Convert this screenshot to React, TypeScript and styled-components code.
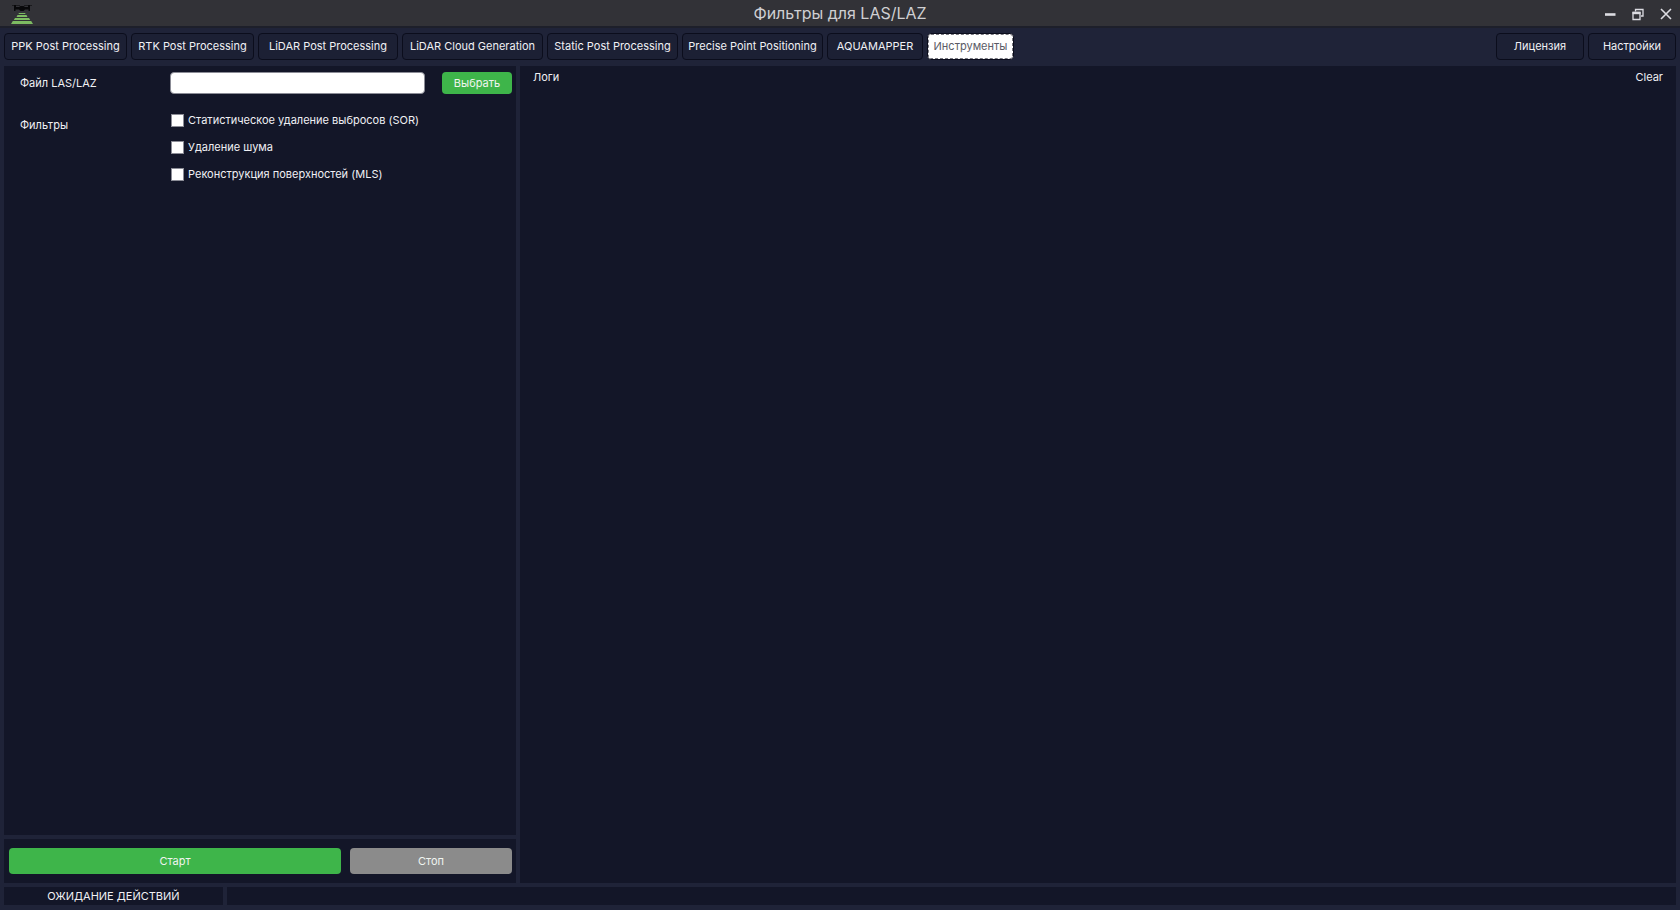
import React, { useState } from 'react';
import styled, { createGlobalStyle } from 'styled-components';

const GlobalStyle = createGlobalStyle`
  *, *::before, *::after { box-sizing: border-box; }
  body {
    margin: 0;
    background: #1f2338;
    color: #f0f0f4;
    font-family: Inter, "Liberation Sans", sans-serif;
    font-size: 11px;
    line-height: 16px;
  }
  button, input { font: inherit; color: inherit; }
`;

const Window = styled.div`
  display: flex;
  flex-direction: column;
  min-height: 100vh;
`;

const TitleBar = styled.header`
  display: grid;
  grid-template-columns: 1fr auto 1fr;
  align-items: center;
  height: 28px;
  padding: 0 6px;
  background: #323237;
  border-bottom: 2px solid #1d1f2a;
`;

const Title = styled.h1`
  margin: 0;
  color: #cfcfd2;
  font-size: 16px;
  font-weight: 400;
  line-height: 24px;
`;

const Logo = styled.svg`
  display: block;
  margin-left: 4px;
`;

const WindowControls = styled.div`
  display: flex;
  justify-content: flex-end;
  gap: 12px;
`;

const ControlButton = styled.button`
  display: flex;
  padding: 2px 0 0;
  border: 0;
  background: none;
  color: #dcdce2;
`;

const Toolbar = styled.nav`
  display: flex;
  gap: 4px;
  padding: 5px 4px 6px;
`;

const NavButton = styled.button<{ $width: number; $active?: boolean }>`
  flex: 0 0 ${({ $width }) => $width}px;
  height: 27px;
  padding: 0 0 2px;
  border: 1px solid #0b0d1c;
  border-radius: 4px;
  outline: ${({ $active }) => ($active ? '1px dashed #77777f' : 'none')};
  outline-offset: -2px;
  background: ${({ $active }) => ($active ? '#ffffff' : '#1c2034')};
  color: ${({ $active }) => ($active ? '#5a5b66' : '#f0f0f4')};
  white-space: nowrap;
`;

const Spacer = styled.div`
  flex: 1;
`;

const Workspace = styled.main`
  flex: 1;
  display: grid;
  grid-template-columns: 512fr 1156fr;
  gap: 4px;
  padding: 0 4px;
`;

const SideColumn = styled.div`
  display: flex;
  flex-direction: column;
  gap: 4px;
`;

const Panel = styled.section`
  background: #131628;
`;

const SettingsPanel = styled(Panel)`
  flex: 1;
  padding: 6px 4px 0 16px;
`;

const FileRow = styled.div`
  display: grid;
  grid-template-columns: 150px 1fr 70px;
  align-items: center;
`;

const FileInput = styled.input`
  height: 22px;
  margin-right: 17px;
  padding: 0 6px;
  border: 1px solid #8b8c96;
  border-radius: 4px;
  background: #ffffff;
  color: #22232c;
`;

const ActionButton = styled.button<{ $tone?: 'green' | 'gray'; $height: number }>`
  height: ${({ $height }) => $height}px;
  padding: 0;
  border: 0;
  border-radius: 4px;
  background: ${({ $tone }) => ($tone === 'gray' ? '#8b8b8b' : '#3eb54a')};
  color: #f0f4f0;
`;

const FilterGroup = styled.div`
  display: grid;
  grid-template-columns: 151px 1fr;
  margin-top: 18px;
`;

const GroupLabel = styled.div`
  padding-top: 5px;
`;

const FilterList = styled.div`
  display: flex;
  flex-direction: column;
  gap: 11px;
`;

const CheckLabel = styled.label`
  display: flex;
  align-items: center;
  gap: 4px;
`;

const CheckBox = styled.input`
  appearance: none;
  width: 13px;
  height: 13px;
  margin: 0;
  border: 1px solid #8b8c96;
  background: #ffffff;
  &:checked {
    background: #3eb54a;
    box-shadow: inset 0 0 0 2px #ffffff;
  }
`;

const RunPanel = styled(Panel)`
  display: grid;
  grid-template-columns: 332fr 162fr;
  gap: 9px;
  padding: 9px 4px 9px 5px;
`;

const LogPanel = styled(Panel)`
  display: flex;
  align-items: flex-start;
  justify-content: space-between;
  padding: 3px 13px 0;
`;

const LogTitle = styled.h2`
  margin: 0;
  font-size: 11px;
  font-weight: 400;
  line-height: 16px;
`;

const ClearButton = styled.button`
  padding: 0;
  border: 0;
  background: none;
`;

const StatusBar = styled.footer`
  display: grid;
  grid-template-columns: 219fr 1449fr;
  gap: 4px;
  padding: 4px 4px 5px;
`;

const StatusCell = styled.div`
  height: 18px;
  background: #131628;
  line-height: 18px;
  text-align: center;
`;

const DroneLogo = () => (
  <Logo width="24" height="24" viewBox="0 0 24 24" aria-hidden="true">
    <g fill="#08080a">
      <path d="M2 4h8v1H2zM14 4h8v1h-8z" opacity=".55" />
      <path d="M4 4h2v2h3l1.500-1h3l1.500 1h3V4h2v6h-1.500V8.500H15L13.500 10h-3L9 8.500H5.500V10H4z" />
    </g>
    <g fill="#7dbb62">
      <path d="M9 12h6l.6 1H8.400z" />
      <path d="M7.500 14h9l1 2h-11z" />
      <path d="M5 17h14l1.200 2H3.800z" />
      <path d="M2.800 20h18.400L23 23H1z" />
    </g>
  </Logo>
);

const MinimizeIcon = () => (
  <svg width="16" height="16" viewBox="0 0 16 16" aria-hidden="true">
    <path d="M3 8.500h10.500" stroke="currentColor" strokeWidth="2.600" />
  </svg>
);

const RestoreIcon = () => (
  <svg width="16" height="16" viewBox="0 0 16 16" fill="none" stroke="currentColor" aria-hidden="true">
    <path d="M5.500 5.500V3.500h7.500v6.500H11" strokeWidth="1.300" />
    <path d="M3 6.500h7v7H3z" strokeWidth="1.300" />
    <path d="M2.500 7h8" strokeWidth="2.400" />
  </svg>
);

const CloseIcon = () => (
  <svg width="16" height="16" viewBox="0 0 16 16" aria-hidden="true">
    <path d="M3 3l10 10M13 3L3 13" stroke="currentColor" strokeWidth="1.600" />
  </svg>
);

const modes = [
  { name: 'PPK Post Processing', width: 123 },
  { name: 'RTK Post Processing', width: 123 },
  { name: 'LiDAR Post Processing', width: 140 },
  { name: 'LiDAR Cloud Generation', width: 141 },
  { name: 'Static Post Processing', width: 131 },
  { name: 'Precise Point Positioning', width: 141 },
  { name: 'AQUAMAPPER', width: 96 },
  { name: 'Инструменты', width: 87 },
];

const filters = [
  'Статистическое удаление выбросов (SOR)',
  'Удаление шума',
  'Реконструкция поверхностей (MLS)',
];

export default function App() {
  const [mode, setMode] = useState('Инструменты');
  const [file, setFile] = useState('');

  return (
    <>
      <GlobalStyle />
      <Window>
        <TitleBar>
          <DroneLogo />
          <Title>Фильтры для LAS/LAZ</Title>
          <WindowControls>
            <ControlButton aria-label="Свернуть"><MinimizeIcon /></ControlButton>
            <ControlButton aria-label="Восстановить"><RestoreIcon /></ControlButton>
            <ControlButton aria-label="Закрыть"><CloseIcon /></ControlButton>
          </WindowControls>
        </TitleBar>
        <Toolbar>
          {modes.map(({ name, width }) => (
            <NavButton key={name} $width={width} $active={name === mode} onClick={() => setMode(name)}>
              {name}
            </NavButton>
          ))}
          <Spacer />
          <NavButton $width={88}>Лицензия</NavButton>
          <NavButton $width={88}>Настройки</NavButton>
        </Toolbar>
        <Workspace>
          <SideColumn>
            <SettingsPanel>
              <FileRow>
                <label htmlFor="las-file">Файл LAS/LAZ</label>
                <FileInput id="las-file" type="text" value={file} onChange={(e) => setFile(e.target.value)} />
                <ActionButton $height={22}>Выбрать</ActionButton>
              </FileRow>
              <FilterGroup role="group" aria-labelledby="filters-label">
                <GroupLabel id="filters-label">Фильтры</GroupLabel>
                <FilterList>
                  {filters.map((name) => (
                    <CheckLabel key={name}>
                      <CheckBox type="checkbox" />
                      {name}
                    </CheckLabel>
                  ))}
                </FilterList>
              </FilterGroup>
            </SettingsPanel>
            <RunPanel>
              <ActionButton $height={26}>Старт</ActionButton>
              <ActionButton $height={26} $tone="gray">Стоп</ActionButton>
            </RunPanel>
          </SideColumn>
          <LogPanel>
            <LogTitle>Логи</LogTitle>
            <ClearButton>Clear</ClearButton>
          </LogPanel>
        </Workspace>
        <StatusBar>
          <StatusCell>ОЖИДАНИЕ ДЕЙСТВИЙ</StatusCell>
          <StatusCell />
        </StatusBar>
      </Window>
    </>
  );
}
